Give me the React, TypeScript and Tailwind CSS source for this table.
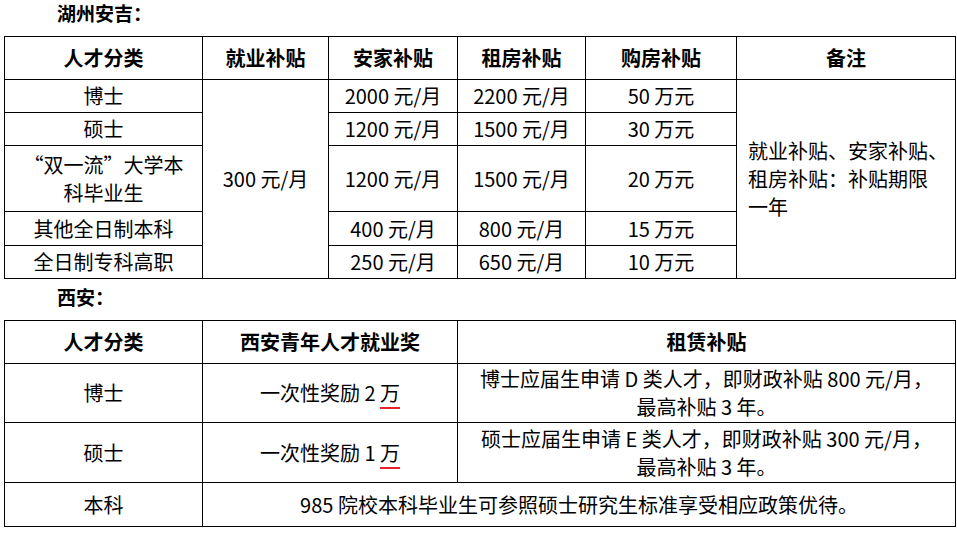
import React from 'react';

const font = { fontFamily: '"Noto Sans CJK SC", "Noto Sans", sans-serif' };

const td = 'border border-black text-center align-middle p-0';

function Wan({ n }: { n: string }) {
  return (
    <span>
      一次性奖励 {n}{' '}
      <span className="underline decoration-[#e8202a] decoration-2 underline-offset-[6px]">万</span>
    </span>
  );
}

export default function App() {
  return (
    <div className="w-[957px] h-[534px] bg-white text-black text-[20px] leading-[28px]" style={font}>
      <div className="h-[36px] pl-[57px] text-[19px] font-bold leading-[26px]">湖州安吉：</div>
      <table className="ml-[4px] w-[951px] table-fixed border-collapse">
        <colgroup>
          <col className="w-[198px]" />
          <col className="w-[126px]" />
          <col className="w-[129px]" />
          <col className="w-[128px]" />
          <col className="w-[151px]" />
          <col className="w-[219px]" />
        </colgroup>
        <tbody>
          <tr className="h-[43px] font-bold">
            <td className={td}>人才分类</td>
            <td className={td}>就业补贴</td>
            <td className={td}>安家补贴</td>
            <td className={td}>租房补贴</td>
            <td className={td}>购房补贴</td>
            <td className={td}>备注</td>
          </tr>
          <tr className="h-[33px]">
            <td className={td}>博士</td>
            <td className={td} rowSpan={5}>300 元/月</td>
            <td className={td}>2000 元/月</td>
            <td className={td}>2200 元/月</td>
            <td className={td}>50 万元</td>
            <td className="border border-black align-middle text-left pl-[11px] pr-0" rowSpan={5}>
              就业补贴、安家补贴、<br />租房补贴：补贴期限<br />一年
            </td>
          </tr>
          <tr className="h-[33px]">
            <td className={td}>硕士</td>
            <td className={td}>1200 元/月</td>
            <td className={td}>1500 元/月</td>
            <td className={td}>30 万元</td>
          </tr>
          <tr className="h-[66px]">
            <td className={td}>
              “双一流”大学本<br />科毕业生
            </td>
            <td className={td}>1200 元/月</td>
            <td className={td}>1500 元/月</td>
            <td className={td}>20 万元</td>
          </tr>
          <tr className="h-[34px]">
            <td className={td}>其他全日制本科</td>
            <td className={td}>400 元/月</td>
            <td className={td}>800 元/月</td>
            <td className={td}>15 万元</td>
          </tr>
          <tr className="h-[33px]">
            <td className={td}>全日制专科高职</td>
            <td className={td}>250 元/月</td>
            <td className={td}>650 元/月</td>
            <td className={td}>10 万元</td>
          </tr>
        </tbody>
      </table>

      <div className="h-[41px] pl-[57px] text-[19px] font-bold leading-[36px]">西安：</div>
      <table className="ml-[4px] w-[951px] table-fixed border-collapse">
        <colgroup>
          <col className="w-[198px]" />
          <col className="w-[255px]" />
          <col className="w-[498px]" />
        </colgroup>
        <tbody>
          <tr className="h-[43px] font-bold">
            <td className={td}>人才分类</td>
            <td className={td}>西安青年人才就业奖</td>
            <td className={td}>租赁补贴</td>
          </tr>
          <tr className="h-[59px]">
            <td className={td}>博士</td>
            <td className={td}>
              <Wan n="2" />
            </td>
            <td className={`${td} leading-[28px]`}>
              博士应届生申请 D 类人才，即财政补贴 800 元/月，<br />最高补贴 3 年。
            </td>
          </tr>
          <tr className="h-[60px]">
            <td className={td}>硕士</td>
            <td className={td}>
              <Wan n="1" />
            </td>
            <td className={`${td} leading-[28px]`}>
              硕士应届生申请 E 类人才，即财政补贴 300 元/月，<br />最高补贴 3 年。
            </td>
          </tr>
          <tr className="h-[44px]">
            <td className={td}>本科</td>
            <td className={td} colSpan={2}>
              985 院校本科毕业生可参照硕士研究生标准享受相应政策优待。
            </td>
          </tr>
        </tbody>
      </table>
    </div>
  );
}
